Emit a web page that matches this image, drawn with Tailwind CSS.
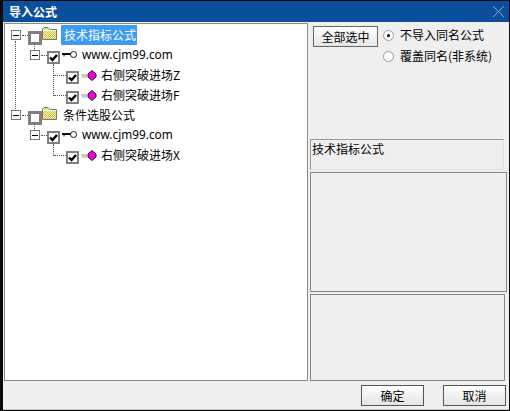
<!DOCTYPE html>
<html lang="zh">
<head>
    <meta charset="UTF-8">
    <title>导入公式</title>
    <script src="https://cdn.jsdelivr.net/npm/@tailwindcss/browser@4"></script>
</head>
<body class="bg-[#0a0a0c] w-[510px] h-[411px] overflow-hidden font-['Noto_Sans_CJK_SC',sans-serif] text-[12px] text-black">
    <svg width="0" height="0" class="absolute">
        <defs>
            <pattern id="hatch" width="2" height="2" patternUnits="userSpaceOnUse">
                <rect width="2" height="2" fill="#fbf6a0"/>
                <rect width="1" height="1" fill="#c9c24a"/>
                <rect x="1" y="1" width="1" height="1" fill="#c9c24a"/>
            </pattern>
        </defs>
    </svg>
    <div class="ml-[3px] mt-[1px] w-[506px] h-[409px] bg-[#efefef] border-b border-[#c8c4b8] flex flex-col">
        <!-- Title bar -->
        <div class="h-[21px] shrink-0 bg-[#0b4f9c] flex items-center justify-between pl-[6px] pr-[3px]">
            <span class="text-white font-bold text-[12px] leading-none">导入公式</span>
            <svg width="13" height="13" viewBox="0 0 13 13" class="mr-[1px]"><path d="M1 1L12 12M12 1L1 12" stroke="#8fa9c9" fill="none"/></svg>
        </div>

        <div class="flex h-[359px] shrink-0 pt-px">
            <!-- Tree -->
            <div class="relative w-[304px] h-[358px] ml-px bg-white border border-[#8a8a8a] pt-px">
                <!-- Connector lines -->
                <div class="absolute left-[10px] top-[17px] h-[70px] border-l border-dotted border-[#555]"></div>
                <div class="absolute left-[29px] top-[20px] h-[7px] border-l border-dotted border-[#555]"></div>
                <div class="absolute left-[48px] top-[40px] h-[32px] border-l border-dotted border-[#555]"></div>
                <div class="absolute left-[29px] top-[100px] h-[7px] border-l border-dotted border-[#555]"></div>
                <div class="absolute left-[48px] top-[120px] h-[12px] border-l border-dotted border-[#555]"></div>

                <!-- Row 1 -->
                <div class="flex items-center h-[20px] pl-[6px]">
                    <span class="w-[10px] h-[10px] border border-[#777] bg-white flex items-center justify-center"><span class="w-[6px] h-px bg-black"></span></span>
                    <span class="w-[6px] ml-px border-t border-dotted border-[#555]"></span>
                    <span class="w-[14px] h-[14px] mt-[5px] border-[3px] border-[#808080] bg-white"></span>
                    <svg width="15" height="13" viewBox="0 0 15 13" class="-mt-[4px] shrink-0"><path d="M0.5 12.5V2L2 0.5H6L8 2.5H14.5V12.5Z" fill="url(#hatch)" stroke="#777"/><path d="M1 3.5H14" stroke="#fff"/></svg>
                    <span class="ml-[4px] w-[76px] h-[20px] bg-[#3d9bf3] text-white text-[12px] leading-[20px] pl-[3px]">技术指标公式</span>
                </div>
                <!-- Row 2 -->
                <div class="flex items-center h-[20px] pl-[25px]">
                    <span class="w-[10px] h-[10px] border border-[#777] bg-white flex items-center justify-center"><span class="w-[6px] h-px bg-black"></span></span>
                    <span class="w-[6px] ml-px border-t border-dotted border-[#555]"></span>
                    <span class="w-[13px] h-[13px] mt-[4px] border-2 border-[#808080] bg-white flex items-center justify-center">
                        <svg width="9" height="9" viewBox="0 0 9 9"><path d="M1 4.5L3.5 7L8 2" stroke="#000" stroke-width="2.4" fill="none"/></svg>
                    </span>
                    <svg width="15" height="9" viewBox="0 0 15 9" class="ml-[2px] -mt-px shrink-0"><path d="M0 4H9" stroke="#111" stroke-width="2" fill="none"/><path d="M2 4V6.5" stroke="#111" fill="none"/><circle cx="11.5" cy="4.5" r="3" fill="#fff" stroke="#111"/></svg>
                    <span class="ml-[5px] font-['Noto_Sans',sans-serif] text-[11.8px]">www.cjm99.com</span>
                </div>
                <!-- Row 3 -->
                <div class="flex items-center h-[20px] pl-[48px]">
                    <span class="w-[12px] border-t border-dotted border-[#555] ml-px"></span>
                    <span class="w-[13px] h-[13px] mt-[4px] shrink-0 border-2 border-[#808080] bg-white flex items-center justify-center">
                        <svg width="9" height="9" viewBox="0 0 9 9"><path d="M1 4.5L3.5 7L8 2" stroke="#000" stroke-width="2.4" fill="none"/></svg>
                    </span>
                    <svg width="16" height="11" viewBox="0 0 16 11" class="ml-[2px] shrink-0"><path d="M0 5H6M1 7H6" stroke="#999"/><path d="M11 0.5L15 4V7L11 10.5L7 7V4Z" fill="#f000e0" stroke="#222"/></svg>
                    <span class="ml-[4px] text-[12px]">右侧突破进场Z</span>
                </div>
                <!-- Row 4 -->
                <div class="flex items-center h-[20px] pl-[48px]">
                    <span class="w-[12px] border-t border-dotted border-[#555] ml-px"></span>
                    <span class="w-[13px] h-[13px] mt-[4px] shrink-0 border-2 border-[#808080] bg-white flex items-center justify-center">
                        <svg width="9" height="9" viewBox="0 0 9 9"><path d="M1 4.5L3.5 7L8 2" stroke="#000" stroke-width="2.4" fill="none"/></svg>
                    </span>
                    <svg width="16" height="11" viewBox="0 0 16 11" class="ml-[2px] shrink-0"><path d="M0 5H6M1 7H6" stroke="#999"/><path d="M11 0.5L15 4V7L11 10.5L7 7V4Z" fill="#f000e0" stroke="#222"/></svg>
                    <span class="ml-[4px] text-[12px]">右侧突破进场F</span>
                </div>
                <!-- Row 5 -->
                <div class="flex items-center h-[20px] pl-[6px]">
                    <span class="w-[10px] h-[10px] border border-[#777] bg-white flex items-center justify-center"><span class="w-[6px] h-px bg-black"></span></span>
                    <span class="w-[6px] ml-px border-t border-dotted border-[#555]"></span>
                    <span class="w-[14px] h-[14px] mt-[5px] border-[3px] border-[#808080] bg-white"></span>
                    <svg width="15" height="13" viewBox="0 0 15 13" class="-mt-[4px] shrink-0"><path d="M0.5 12.5V2L2 0.5H6L8 2.5H14.5V12.5Z" fill="url(#hatch)" stroke="#777"/><path d="M1 3.5H14" stroke="#fff"/></svg>
                    <span class="ml-[6px] text-[12px]">条件选股公式</span>
                </div>
                <!-- Row 6 -->
                <div class="flex items-center h-[20px] pl-[25px]">
                    <span class="w-[10px] h-[10px] border border-[#777] bg-white flex items-center justify-center"><span class="w-[6px] h-px bg-black"></span></span>
                    <span class="w-[6px] ml-px border-t border-dotted border-[#555]"></span>
                    <span class="w-[13px] h-[13px] mt-[4px] border-2 border-[#808080] bg-white flex items-center justify-center">
                        <svg width="9" height="9" viewBox="0 0 9 9"><path d="M1 4.5L3.5 7L8 2" stroke="#000" stroke-width="2.4" fill="none"/></svg>
                    </span>
                    <svg width="15" height="9" viewBox="0 0 15 9" class="ml-[2px] -mt-px shrink-0"><path d="M0 4H9" stroke="#111" stroke-width="2" fill="none"/><path d="M2 4V6.5" stroke="#111" fill="none"/><circle cx="11.5" cy="4.5" r="3" fill="#fff" stroke="#111"/></svg>
                    <span class="ml-[5px] font-['Noto_Sans',sans-serif] text-[11.8px]">www.cjm99.com</span>
                </div>
                <!-- Row 7 -->
                <div class="flex items-center h-[20px] pl-[48px]">
                    <span class="w-[12px] border-t border-dotted border-[#555] ml-px"></span>
                    <span class="w-[13px] h-[13px] mt-[4px] shrink-0 border-2 border-[#808080] bg-white flex items-center justify-center">
                        <svg width="9" height="9" viewBox="0 0 9 9"><path d="M1 4.5L3.5 7L8 2" stroke="#000" stroke-width="2.4" fill="none"/></svg>
                    </span>
                    <svg width="16" height="11" viewBox="0 0 16 11" class="ml-[2px] shrink-0"><path d="M0 5H6M1 7H6" stroke="#999"/><path d="M11 0.5L15 4V7L11 10.5L7 7V4Z" fill="#f000e0" stroke="#222"/></svg>
                    <span class="ml-[4px] text-[12px]">右侧突破进场X</span>
                </div>
            </div>

            <!-- Right column -->
            <div class="flex-1 pl-[2px] flex flex-col">
                <div class="flex h-[116px] pl-[3px] pt-[3px]">
                    <button class="w-[65px] h-[21px] shrink-0 border border-[#666] bg-gradient-to-b from-white to-[#e6e6e6] text-[12px] leading-none">全部选中</button>
                    <div class="ml-[5px] flex flex-col gap-[3px]">
                        <div class="flex items-center h-[18px]">
                            <span class="w-[11px] h-[11px] rounded-full border border-[#999] bg-white flex items-center justify-center"><span class="w-[3px] h-[3px] rounded-full bg-black"></span></span>
                            <span class="ml-[6px] text-[12px]">不导入同名公式</span>
                        </div>
                        <div class="flex items-center h-[18px]">
                            <span class="w-[11px] h-[11px] rounded-full border border-[#999] bg-white"></span>
                            <span class="ml-[6px] text-[12px]">覆盖同名(非系统)</span>
                        </div>
                    </div>
                </div>
                <div class="w-[194px] h-[31px] border border-[#999] border-b-[#ddd] border-r-[#ddd] text-[12px] leading-[18px] pl-px">技术指标公式</div>
                <div class="w-[197px] h-[120px] mt-[2px] border border-[#888]"></div>
                <div class="w-[195px] h-[87px] mt-[2px] border border-[#888]"></div>
            </div>
        </div>

        <!-- Footer buttons -->
        <div class="flex justify-end gap-[19px] pr-[3px] pt-[4px]">
            <button class="w-[63px] h-[21px] border border-[#555] bg-gradient-to-b from-white to-[#e4e4e4] text-[12px] leading-none">确定</button>
            <button class="w-[63px] h-[21px] border border-[#555] bg-gradient-to-b from-white to-[#e4e4e4] text-[12px] leading-none">取消</button>
        </div>
    </div>
</body>
</html>
